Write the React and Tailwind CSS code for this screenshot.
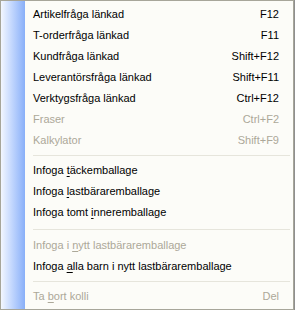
import React from "react";

const items = [
  { label: "Artikelfråga länkad", key: "F12" },
  { label: "T-orderfråga länkad", key: "F11" },
  { label: "Kundfråga länkad", key: "Shift+F12" },
  { label: "Leverantörsfråga länkad", key: "Shift+F11" },
  { label: "Verktygsfråga länkad", key: "Ctrl+F12" },
  { label: "Fraser", key: "Ctrl+F2", disabled: true },
  { label: "Kalkylator", key: "Shift+F9", disabled: true },
  { sep: "h-[9px]" },
  { pre: "Infoga ", u: "t", post: "äckemballage" },
  { pre: "Infoga ", u: "l", post: "astbäraremballage" },
  { pre: "Infoga tomt ", u: "i", post: "nneremballage" },
  { sep: "h-[12px]" },
  { pre: "Infoga i ", u: "n", post: "ytt lastbäraremballage", disabled: true },
  { pre: "Infoga ", u: "a", post: "lla barn i nytt lastbäraremballage" },
  { sep: "h-[9px]" },
  { pre: "Ta ", u: "b", post: "ort kolli", key: "Del", disabled: true },
];

const MenuRow = ({ item }) => {
  if (item.sep) {
    return (
      <div className={`${item.sep} flex items-center pl-[8px] pr-[3px]`}>
        <div className="h-px w-full bg-[#e6e5dc]" />
      </div>
    );
  }
  return (
    <div
      className={`h-[21px] flex items-center justify-between pl-[8px] pr-[14px] ${
        item.disabled ? "text-[#aca899]" : "text-black"
      }`}
    >
      <span>
        {item.label ? (
          item.label
        ) : (
          <>
            {item.pre}
            <span className="underline underline-offset-2">{item.u}</span>
            {item.post}
          </>
        )}
      </span>
      {item.key && <span>{item.key}</span>}
    </div>
  );
};

export default function App() {
  return (
    <div className="w-[295px] h-[310px] bg-white">
      <div
        className="w-[294px] h-[310px] flex border border-[#a7a69a] bg-[#fcfcf8] shadow-[1px_0_0_#8f8f8f] text-[11px] leading-none"
        style={{ fontFamily: '"Liberation Sans", Arial, sans-serif' }}
      >
        <div className="w-[24px] shrink-0 bg-gradient-to-r from-[#f3f7ff] to-[#89aff8]" />
        <div className="flex-1 pt-[3px]">
          {items.map((item, i) => (
            <MenuRow key={i} item={item} />
          ))}
        </div>
      </div>
    </div>
  );
}
